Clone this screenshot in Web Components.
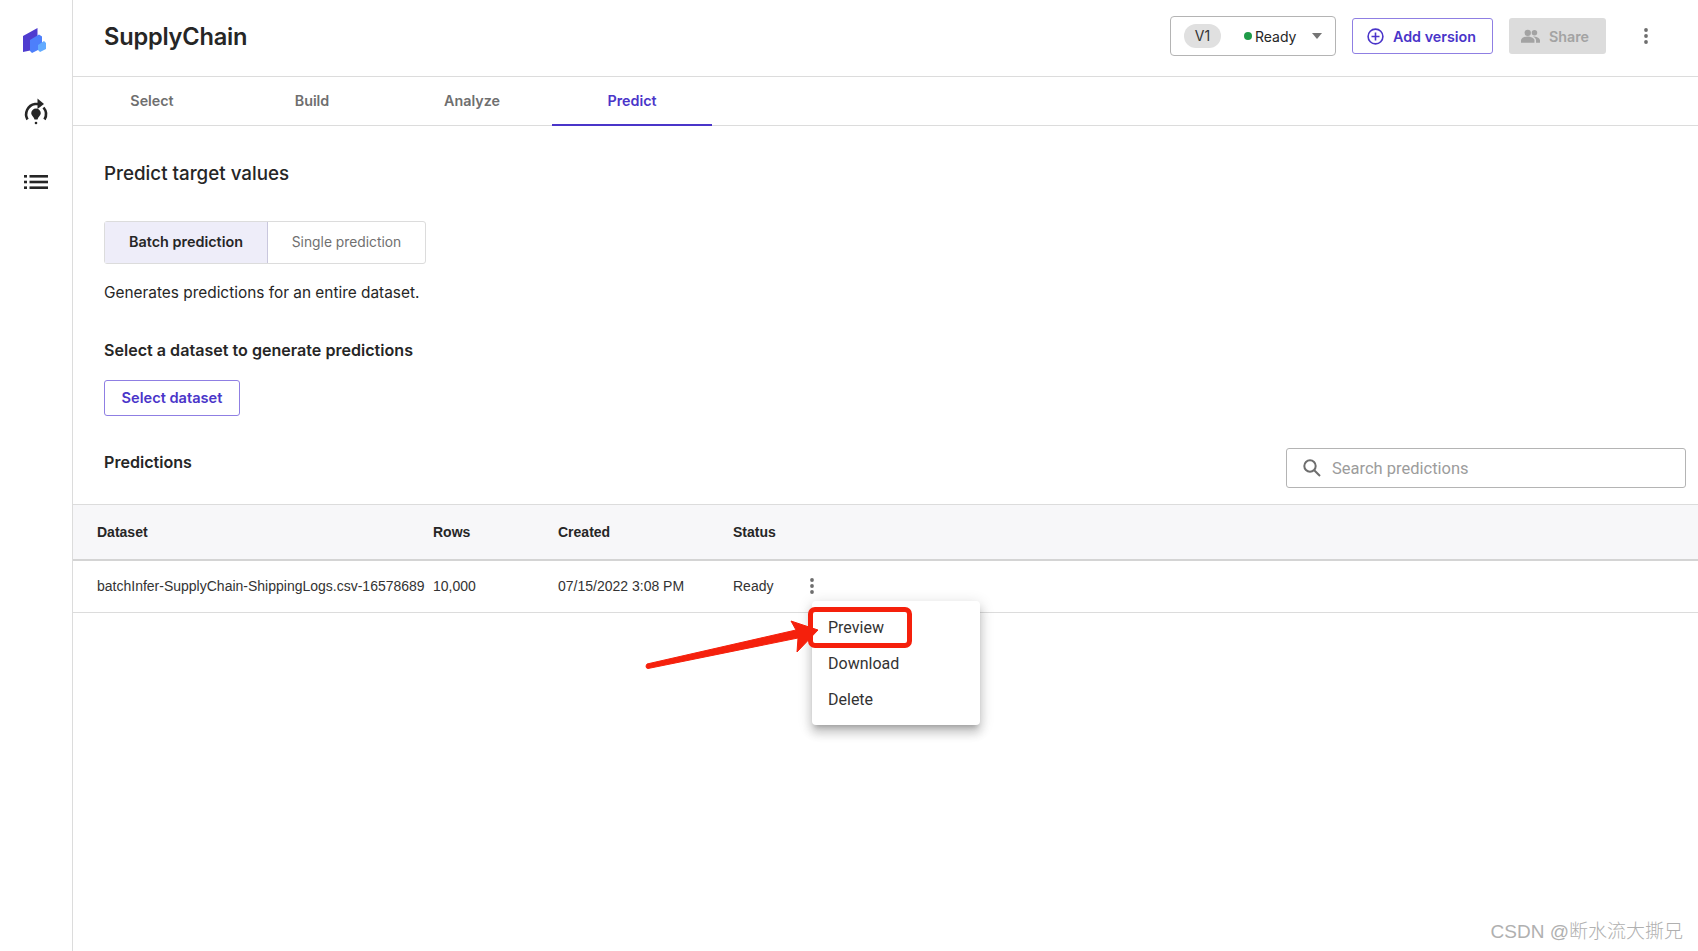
<!DOCTYPE html>
<html>
  <head>
    <meta charset="utf-8" />
    <title>SupplyChain</title>
    <style>
      html, body { margin: 0; height: 100%; background: #fff; }
      body { font-family: Inter, "Liberation Sans", sans-serif; color: #262626; overflow: hidden; }
    </style>
  </head>

  <body>
    <app-shell>
      <side-rail slot="rail"></side-rail>
      <page-header slot="main"></page-header>
      <tab-bar slot="main"></tab-bar>
      <predict-panel slot="main"></predict-panel>
      <prediction-table slot="main"></prediction-table>
    </app-shell>
    <red-callout></red-callout>
    <water-mark>CSDN @断水流大撕兄</water-mark>

    <script type="text/javascript">
      // small helper, every element just sets its shadow html once
      class Base extends HTMLElement {
        constructor() {
          super();
          this.attachShadow({ mode: "open" });
          this.shadowRoot.innerHTML = this.constructor.html;
        }
      }

      const dots = `<svg width="4" height="16" viewBox="0 0 4 16" fill="#6e6e6e"><circle cx="2" cy="2" r="1.9"/><circle cx="2" cy="8" r="1.9"/><circle cx="2" cy="14" r="1.9"/></svg>`;

      class AppShell extends Base {
        static html = `
          <style>
            :host { display: flex; height: 951px; }
            .rail { flex: 0 0 72px; border-right: 1px solid #dcdcdc; }
            .main { flex: 1; min-width: 0; display: flex; flex-direction: column; }
          </style>
          <div class="rail"><slot name="rail"></slot></div>
          <div class="main"><slot name="main"></slot></div>`;
      }

      class SideRail extends Base {
        static html = `
          <style>
            :host { display: flex; flex-direction: column; align-items: center; padding-top: 28px; }
            svg { display: block; }
          </style>
          <svg width="23" height="25" viewBox="0 0 23 25" style="margin-left:-4px">
            <path fill="#4f3ccf" d="M0 8 14.500 0V21L0 24z"/>
            <path fill="#4d7ffb" d="M7 12 16 6.500 19 8.500V20L9 25 7 23z"/>
            <path fill="#63abff" d="M15 17 21 13 23 15V21L17 24 15 22z"/>
          </svg>
          <svg width="28" height="28" viewBox="0 0 28 28" fill="none" stroke="#262626" stroke-width="2.600" style="margin-top:45px">
            <path d="M5.500 21.500A10.500 10.500 0 0 1 13 6H18"/>
            <path fill="#262626" stroke="none" d="M15.500 .5 22 6 15.500 11z"/>
            <path d="M21.500 9.500A10.500 10.500 0 0 1 22.500 21.500"/>
            <path fill="#262626" stroke="none" d="M14 10.500a4.800 4.800 0 0 1 4.800 4.800c0 2.200-2.800 3.700-3.300 6.200h-3C12 19 9.200 17.500 9.200 15.300a4.800 4.800 0 0 1 4.800-4.800z"/>
            <circle cx="14" cy="25" r="1.300" fill="#262626" stroke="none"/>
          </svg>
          <svg width="26" height="16" viewBox="0 0 26 16" fill="#262626" style="margin-top:48px">
            <rect x="1" y="1" width="3" height="2.600"/><rect x="6.500" y="1" width="18.500" height="2.600"/>
            <rect x="1" y="6.700" width="3" height="2.600"/><rect x="6.500" y="6.700" width="18.500" height="2.600"/>
            <rect x="1" y="12.400" width="3" height="2.600"/><rect x="6.500" y="12.400" width="18.500" height="2.600"/>
          </svg>`;
      }

      class PageHeader extends Base {
        static html = `
          <style>
            :host { display: flex; align-items: center; height: 72px; border-bottom: 1px solid #dcdcdc; padding: 0 50px 4px 31px; font-family: Inter, sans-serif; }
            h1 { margin: 0; flex: 1; font-size: 23.600px; font-weight: 600; letter-spacing: -0.2px; color: #262626; }
            .version { box-sizing: border-box; width: 166px; height: 40px; border: 1px solid #b4b4b4; border-radius: 4px; display: flex; align-items: center; padding: 0 13px 0 13px; font-size: 14px; margin-right: 16px; }
            .chip { width: 37px; height: 24px; line-height: 24px; text-align: center; border-radius: 12px; background: #e0e0e0; color: #333; }
            .dot { width: 8px; height: 8px; border-radius: 50%; background: #1f9b48; margin-left: 23px; margin-right: 3px; }
            .caret { margin-left: auto; width: 0; height: 0; border: 5px solid transparent; border-top: 6px solid #757575; border-bottom: 0; }
            button { box-sizing: border-box; height: 36px; border-radius: 3px; font: 600 14.300px Inter, sans-serif; display: flex; align-items: center; padding: 0; }
            .add { width: 141px; border: 1px solid #8f7fe3; background: #fff; color: #4a35c9; padding-left: 14px; gap: 9px; margin-right: 16px; }
            .share { width: 97px; border: 0; background: #dcdcdc; color: #a3a3a3; padding-left: 12px; gap: 9px; margin-right: 38px; }
          </style>
          <h1>SupplyChain</h1>
          <div class="version"><span class="chip">V1</span><span class="dot"></span><span>Ready</span><span class="caret"></span></div>
          <button class="add">
            <svg width="17" height="17" viewBox="0 0 17 17" fill="none" stroke="#4a35c9" stroke-width="1.600"><circle cx="8.500" cy="8.500" r="7.400"/><path d="M8.500 4.500v8M4.500 8.500h8"/></svg>
            Add version</button>
          <button class="share">
            <svg width="19" height="14" viewBox="0 0 24 17" fill="#a3a3a3"><circle cx="8.500" cy="4.500" r="4"/><circle cx="17" cy="4.500" r="3.500"/><path d="M0 17v-3c0-3 5-5 8.500-5s8.500 2 8.500 5v3z"/><path d="M15 9.100c4 0 9 1.700 9 4.900v3h-5v-3c0-2-1.500-3.700-4-4.900z"/></svg>
            Share</button>
          ${dots}`;
      }

      class TabBar extends Base {
        static html = `
          <style>
            :host { display: flex; height: 48px; border-bottom: 1px solid #dcdcdc; font: 600 14.300px Inter, sans-serif; color: #6f6f6f; }
            div { box-sizing: border-box; width: 160px; text-align: center; line-height: 47px; position: relative; left: -1px; }
            .on { color: #4a35c9; border-bottom: 2px solid #4a35c9; height: 49px; }
          </style>
          <div>Select</div><div>Build</div><div>Analyze</div><div class="on">Predict</div>`;
      }

      class PredictPanel extends Base {
        static html = `
          <style>
            :host { display: block; padding: 36px 12px 0 31px; font-family: Inter, sans-serif; color: #262626; }
            h2 { margin: 0; font-size: 18.800px; font-weight: 500; line-height: 24px; }
            .seg { display: flex; margin-top: 35px; width: 322px; height: 43px; box-sizing: border-box; border: 1px solid #dcdcdc; border-radius: 3px; font-size: 13.800px; line-height: 41px; text-align: center; }
            .seg .a { width: 162px; background: #eeedf9; border-right: 1px solid #c9c7dd; font-weight: 600; font-size: 14.400px; line-height: 40px; }
            .seg .b { flex: 1; color: #707070; }
            p { margin: 18px 0 0; font-size: 15.400px; line-height: 22px; }
            h3 { margin: 35px 0 0; font-size: 16.100px; font-weight: 600; line-height: 22px; }
            button { display: block; margin-top: 19px; box-sizing: border-box; width: 136px; height: 36px; background: #fff; border: 1px solid #8f7fe3; border-radius: 3px; font: 600 14.600px Inter, sans-serif; color: #4a35c9; padding: 0; }
            .row { display: flex; justify-content: space-between; align-items: flex-start; margin-top: 32px; height: 56px; }
            .row h3 { margin: 3px 0 0; }
            .search { box-sizing: border-box; width: 400px; height: 40px; border: 1px solid #b4b4b4; border-radius: 3px; display: flex; align-items: center; padding-left: 15px; gap: 10px; font: 16.500px Roboto, sans-serif; color: #9c9c9c; }
          </style>
          <h2>Predict target values</h2>
          <div class="seg"><div class="a">Batch prediction</div><div class="b">Single prediction</div></div>
          <p>Generates predictions for an entire dataset.</p>
          <h3>Select a dataset to generate predictions</h3>
          <button>Select dataset</button>
          <div class="row">
            <h3>Predictions</h3>
            <div class="search">
              <svg width="20" height="20" viewBox="0 0 20 20" fill="none" stroke="#6e6e6e" stroke-width="2"><circle cx="8" cy="8" r="5.700"/><path d="M12.200 12.200 18 18"/></svg>
              Search predictions
            </div>
          </div>`;
      }

      class PredictionTable extends Base {
        static html = `
          <style>
            :host { display: block; font: 14px "Liberation Sans", Arial, sans-serif; color: #333; position: relative; }
            .r { display: grid; grid-template-columns: 336px 125px 175px 77px 1fr; padding-left: 24px; align-items: center; }
            .h { height: 54px; background: #f7f7f9; border-top: 1px solid #dcdcdc; border-bottom: 2px solid #d4d4d4; font-weight: 700; color: #262626; }
            .b { height: 49px; padding-bottom: 2px; border-bottom: 1px solid #dcdcdc; }
            .clip { white-space: nowrap; }
            .b svg { display: block; }
            row-menu { position: absolute; left: 739px; top: 97px; }
          </style>
          <div class="r h"><div>Dataset</div><div>Rows</div><div>Created</div><div>Status</div></div>
          <div class="r b"><div class="clip">batchInfer-SupplyChain-ShippingLogs.csv-16578689</div><div>10,000</div><div>07/15/2022 3:08 PM</div><div>Ready</div><div>${dots}</div></div>
          <row-menu></row-menu>`;
      }

      class RowMenu extends Base {
        static html = `
          <style>
            :host { display: block; width: 168px; background: #fff; border-radius: 4px; padding: 8px 0; font: 16px Roboto, sans-serif; color: #333; box-shadow: 0 5px 5px -3px rgba(0,0,0,.2), 0 8px 10px 1px rgba(0,0,0,.14), 0 3px 14px 2px rgba(0,0,0,.12); }
            div { height: 36px; line-height: 38px; padding-left: 16px; }
          </style>
          <div>Preview</div><div>Download</div><div>Delete</div>`;
      }

      // the red markup drawn over the screenshot
      class RedCallout extends Base {
        static html = `
          <style>
            :host { display: block; position: absolute; left: 640px; top: 600px; width: 280px; height: 80px; pointer-events: none; }
            .box { position: absolute; left: 168px; top: 7px; width: 104px; height: 41px; box-sizing: border-box; border: 5px solid #f5200c; border-radius: 7px; }
            svg { position: absolute; left: 0; top: 0; }
          </style>
          <svg width="280" height="80" viewBox="0 0 280 80"><path fill="#f5200c" stroke="#f5200c" stroke-linejoin="round" d="M6 66 Q6 68.500 8 68.500L158 38 L157 52 L178 30 L151 21 L156 30 L7 64z"/></svg>
          <div class="box"></div>`;
      }

      class WaterMark extends Base {
        static html = `
          <style>
            :host { display: block; position: absolute; right: 15px; top: 920px; font: 19px/24px "Liberation Sans", "Noto Sans CJK SC", sans-serif; font-weight: 300; color: #b0b0b0; }
          </style>
          <slot></slot>`;
      }

      customElements.define("app-shell", AppShell);
      customElements.define("side-rail", SideRail);
      customElements.define("page-header", PageHeader);
      customElements.define("tab-bar", TabBar);
      customElements.define("predict-panel", PredictPanel);
      customElements.define("prediction-table", PredictionTable);
      customElements.define("row-menu", RowMenu);
      customElements.define("red-callout", RedCallout);
      customElements.define("water-mark", WaterMark);
    </script>
  </body>
</html>
